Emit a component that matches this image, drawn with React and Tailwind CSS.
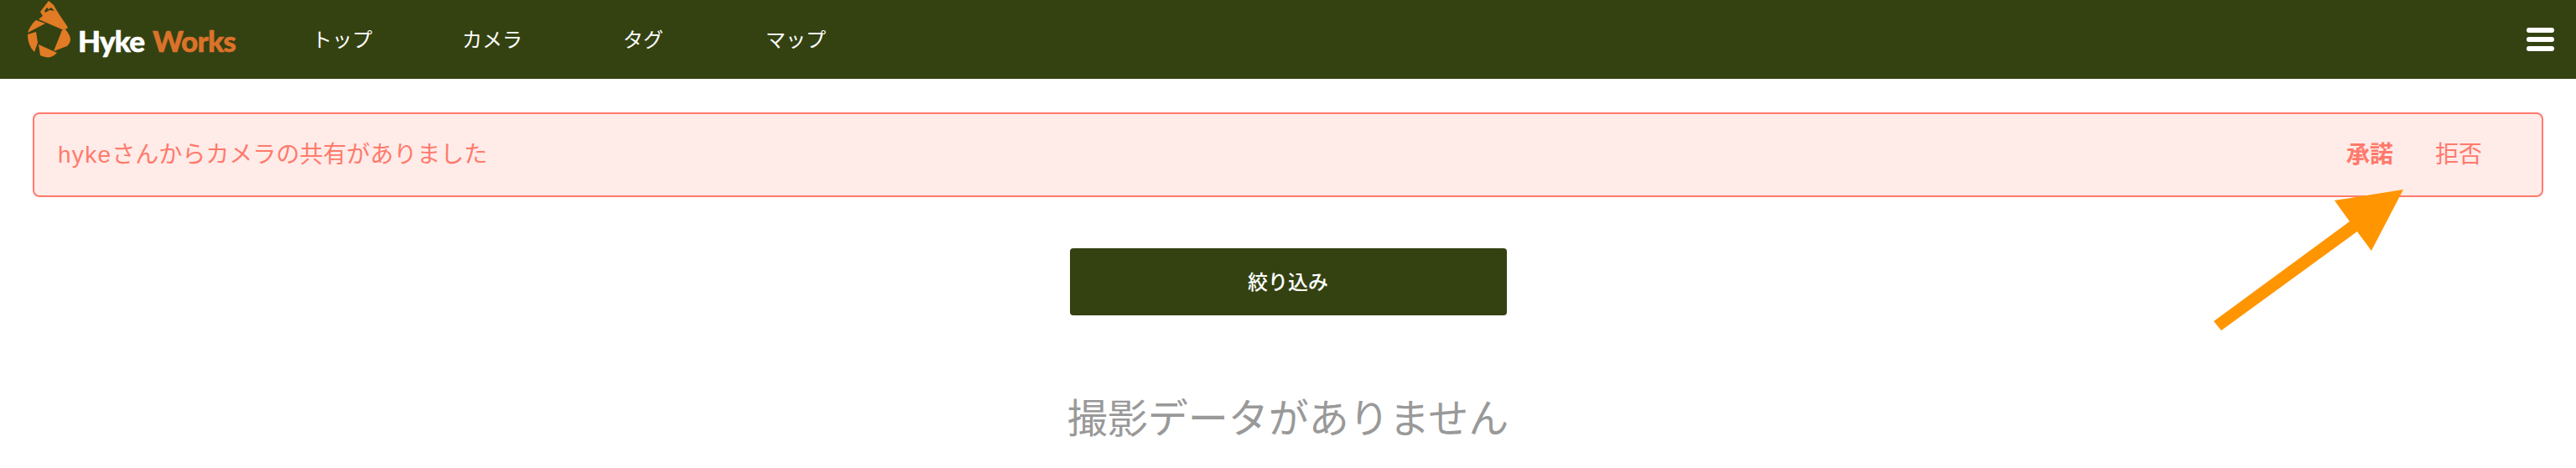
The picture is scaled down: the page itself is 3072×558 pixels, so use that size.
const navItems = [
  { label: 'トップ', className: 'ml-[93px]' },
  { label: 'カメラ', className: 'ml-[107px]' },
  { label: 'タグ', className: 'ml-[120px]' },
  { label: 'マップ', className: 'ml-[122px]' },
];

const Logo = () => (
  <div className="flex items-center h-full w-[279px] shrink-0">
    <svg width="62" height="72" viewBox="0 0 62 72" className="ml-[28px] self-start shrink-0">
      <g fill="#e27b25">
        <path d="M30 1 L36 6 L40 13 C44 20 50 27 53 33 L48 36 L18 23 L23 19 L20 14 Z" />
        <path d="M5 39 C7 33 11 27 15 24 L26 28 Z" />
        <path d="M5 41 L15 38 L17 51 L13 62 C8 57 5 50 5 41 Z" />
        <path d="M18 53 L40 63 C37 66 34 68 30 68.500 C27 68.500 23 67.500 20 66 Z" />
        <path d="M46 36 L50 35 C54 40 56 44 56 47 C56 50 54 53 52 55 L36 61 Z" />
      </g>
      <path d="M25 13 L28 9 L30 11 L33 9 L37 13 L31 12 L26 15 Z" fill="#344212" />
    </svg>
    <div className="ml-[3px] mt-[3px] text-[35px] font-black leading-none tracking-[-0.8px] [-webkit-text-stroke:0.6px] font-['Lato',sans-serif] whitespace-nowrap">
      <span className="text-white">Hyke</span>
      <span className="text-[#dc722a] ml-[10px]">Works</span>
    </div>
  </div>
);

const App = () => {
  return (
    <div className="relative w-full h-[558px] overflow-hidden bg-white font-['Liberation_Sans','Noto_Sans_CJK_JP',sans-serif]">
      <header className="h-[94px] bg-[#344212] flex items-center">
        <Logo />
        <nav className="flex items-center text-white text-[24px] pt-[2px]">
          {navItems.map((item) => (
            <a key={item.label} className={item.className}>
              {item.label}
            </a>
          ))}
        </nav>
        <button className="ml-auto mr-[26px] flex flex-col gap-[5px]">
          <span className="block w-[33px] h-[6px] rounded-full bg-white" />
          <span className="block w-[33px] h-[6px] rounded-full bg-white" />
          <span className="block w-[33px] h-[6px] rounded-full bg-white" />
        </button>
      </header>

      <div className="mt-[40px] mx-[39px] h-[101px] flex items-center justify-between border-2 border-[#ff7a6c] rounded-[8px] bg-[#ffebe8] text-[#ff7a6c] text-[28px] pl-[28px] pr-[71px]">
        <span>
          <span className="tracking-[1.3px]">hyke</span>さんからカメラの共有がありました
        </span>
        <div className="flex gap-[50px]">
          <span className="font-bold">承諾</span>
          <span>拒否</span>
        </div>
      </div>

      <div className="flex flex-col items-center">
        <button className="mt-[61px] w-[521px] h-[80px] pt-[2px] rounded-[4px] bg-[#344212] text-white text-[24px] font-medium">
          絞り込み
        </button>
        <h2 className="mt-[92px] text-[48px] leading-[64px] text-[#999999]">撮影データがありません</h2>
      </div>

      <svg className="absolute left-[2630px] top-[216px]" width="246" height="188" viewBox="2630 216 246 188">
        <path d="M2866 226 L2784 239 L2802 264 L2640 383 L2649 394 L2811 276 L2828 299 Z" fill="#ff9500" />
      </svg>
    </div>
  );
};

export default App;
